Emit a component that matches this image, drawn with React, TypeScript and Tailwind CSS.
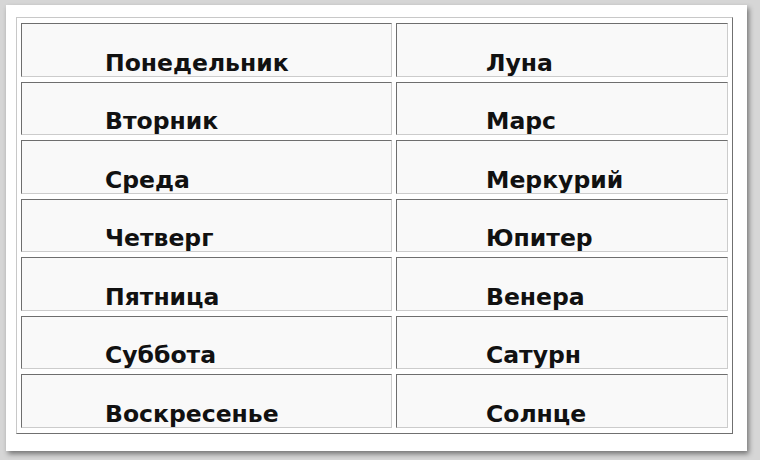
import React from "react";

const rows: [string, string][] = [
  ["Понедельник", "Луна"],
  ["Вторник", "Марс"],
  ["Среда", "Меркурий"],
  ["Четверг", "Юпитер"],
  ["Пятница", "Венера"],
  ["Суббота", "Сатурн"],
  ["Воскресенье", "Солнце"],
];

export default function App() {
  return (
    <div className="w-[760px] h-[460px] bg-[#d6d6d6] pt-[5px] pl-[6px] overflow-hidden">
      <div className="w-[741px] h-[446px] bg-white shadow-[2px_3px_5px_rgba(0,0,0,0.45)] pt-[12px] pl-[10px]">
        <div className="w-[717px] h-[417px] border border-t-[#c8c8c8] border-l-[#c8c8c8] border-b-[#707070] border-r-[#707070] bg-white p-[5px] px-[4px] flex flex-col gap-[5px]">
          {rows.map(([a, b]) => (
            <div key={a} className="flex-1 flex gap-[4px]">
              <div className="w-[371px] flex items-end pl-[83px] pb-[1px] bg-[#f9f9f9] border border-t-[#6e6e6e] border-l-[#6e6e6e] border-b-[#cccccc] border-r-[#cccccc]">
                <span className="text-[23.5px] leading-[24px] font-bold text-[#111] [font-family:'DejaVu_Sans',sans-serif]">{a}</span>
              </div>
              <div className="flex-1 flex items-end pl-[89px] pb-[1px] bg-[#f9f9f9] border border-t-[#6e6e6e] border-l-[#6e6e6e] border-b-[#cccccc] border-r-[#cccccc]">
                <span className="text-[23.5px] leading-[24px] font-bold text-[#111] [font-family:'DejaVu_Sans',sans-serif]">{b}</span>
              </div>
            </div>
          ))}
        </div>
      </div>
    </div>
  );
}
